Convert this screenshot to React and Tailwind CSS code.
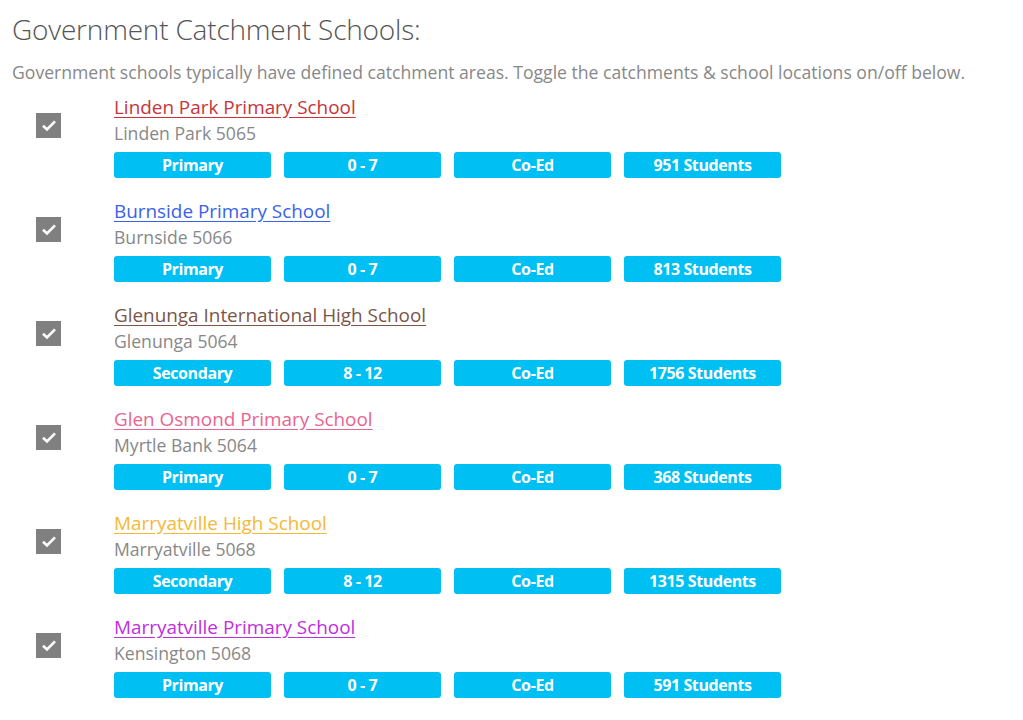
import React from "react";

const schools = [
  { name: "Linden Park Primary School", color: "text-[#c8343a]", loc: "Linden Park 5065", type: "Primary", years: "0 - 7", students: "951 Students" },
  { name: "Burnside Primary School", color: "text-[#3a62e8]", loc: "Burnside 5066", type: "Primary", years: "0 - 7", students: "813 Students" },
  { name: "Glenunga International High School", color: "text-[#7a5548]", loc: "Glenunga 5064", type: "Secondary", years: "8 - 12", students: "1756 Students" },
  { name: "Glen Osmond Primary School", color: "text-[#e8658f]", loc: "Myrtle Bank 5064", type: "Primary", years: "0 - 7", students: "368 Students" },
  { name: "Marryatville High School", color: "text-[#f5b83a]", loc: "Marryatville 5068", type: "Secondary", years: "8 - 12", students: "1315 Students" },
  { name: "Marryatville Primary School", color: "text-[#c02ee0]", loc: "Kensington 5068", type: "Primary", years: "0 - 7", students: "591 Students" },
];

function Badge({ children }) {
  return (
    <div className="w-[157px] h-[26px] rounded-[3px] bg-[#00bff3] text-white font-bold text-[16px] tracking-[-0.4px] leading-none flex items-center justify-center">
      {children}
    </div>
  );
}

export default function App() {
  return (
    <div className="bg-white min-h-[720px] px-3 pt-[13px] font-['Open_Sans',sans-serif]">
      <h1 className="text-[28px] font-light text-[#555] leading-[32px] tracking-[-0.2px]">Government Catchment Schools:</h1>
      <p className="text-[17.6px] text-[#888] mt-[15px] leading-[24px] whitespace-nowrap">
        Government schools typically have defined catchment areas. Toggle the catchments &amp; school locations on/off below.
      </p>
      <div className="mt-[12px] flex flex-col gap-[22px]">
        {schools.map((s) => (
          <div key={s.name} className="flex">
            <div className="w-[102px] pl-[24px] pt-[17px]">
              <div className="w-[25px] h-[25px] bg-[#808080] flex items-center justify-center">
                <svg width="16" height="13" viewBox="0 0 16 13" fill="none">
                  <path d="M2 6.8 L6 10.4 L14 2.4" stroke="white" strokeWidth="2.6" />
                </svg>
              </div>
            </div>
            <div className="flex flex-col">
              <a href="#" className={`text-[18.9px] leading-[22px] underline underline-offset-[3px] ${s.color}`}>{s.name}</a>
              <div className="text-[17.6px] leading-[22px] text-[#888] mt-[4px]">{s.loc}</div>
              <div className="flex gap-[13px] mt-[8px]">
                <Badge>{s.type}</Badge>
                <Badge>{s.years}</Badge>
                <Badge>Co-Ed</Badge>
                <Badge>{s.students}</Badge>
              </div>
            </div>
          </div>
        ))}
      </div>
    </div>
  );
}
